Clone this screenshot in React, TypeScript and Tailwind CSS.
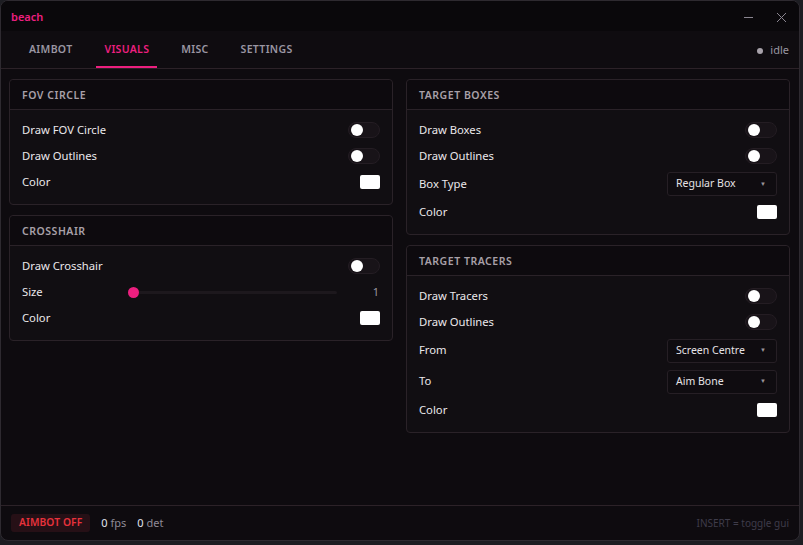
import React from 'react'

const font = { fontFamily: '"Noto Sans", "Open Sans", sans-serif' }

const tabs = ['AIMBOT', 'VISUALS', 'MISC', 'SETTINGS']

function Toggle() {
  return (
    <div className="w-[32px] h-[16px] rounded-full bg-[#181318] border border-[#241d23] flex items-center px-[2px]">
      <div className="w-[12px] h-[12px] rounded-full bg-white" />
    </div>
  )
}

function Swatch() {
  return <div className="w-[20px] h-[14px] rounded-[2px] bg-white" />
}

function Select({ value }: { value: string }) {
  return (
    <div className="w-[110px] h-[24px] rounded-[3px] bg-[#0f0c10] border border-[#261f25] flex items-center justify-between pl-[8px] pr-[10px]">
      <span className="text-[10.5px] text-[#e6e3e6]">{value}</span>
      <span className="text-[6px] text-[#9a949a]">▼</span>
    </div>
  )
}

function Row({ label, children, h = 'h-[26px]' }: { label: string; children: React.ReactNode; h?: string }) {
  return (
    <div className={`flex items-center justify-between ${h}`}>
      <span className="text-[11.25px] text-[#ebe8eb]">{label}</span>
      {children}
    </div>
  )
}

function Panel({ title, children }: { title: string; children: React.ReactNode }) {
  return (
    <div className="rounded-[4px] border border-[#2a2228] bg-[#110e12]">
      <div className="h-[30px] flex items-center px-[12px] pt-[3px] border-b border-[#2a2228] bg-[#0d0a0e] rounded-t-[4px]">
        <span className="text-[10.5px] font-semibold tracking-[0.05em] text-[#a8a0a8]">{title}</span>
      </div>
      <div className="px-[12px] pt-[7px] pb-[9px]">{children}</div>
    </div>
  )
}

export default function App() {
  return (
    <div className="w-[803px] h-[545px] bg-[#1d1d22]" style={font}>
      <div className="w-[800px] h-[541px] rounded-[8px] border border-[#2e2a30] bg-[#0e0b0f] flex flex-col overflow-hidden">
        {/* Title bar */}
        <div className="h-[30px] bg-[#0a080b] flex items-center justify-between pl-[10px] pr-[12px] pt-[2px] shrink-0">
          <span className="text-[11px] font-semibold text-[#ec1f7f]">beach</span>
          <div className="flex items-center gap-[22px] text-[#8a8590]">
            <svg width="11" height="11" viewBox="0 0 11 11">
              <line x1="1" y1="5.5" x2="10" y2="5.5" stroke="currentColor" strokeWidth="1" />
            </svg>
            <svg width="11" height="11" viewBox="0 0 11 11">
              <line x1="1" y1="1" x2="10" y2="10" stroke="currentColor" strokeWidth="1" />
              <line x1="10" y1="1" x2="1" y2="10" stroke="currentColor" strokeWidth="1" />
            </svg>
          </div>
        </div>

        {/* Tabs */}
        <div className="h-[38px] bg-[#0f0c10] border-b border-[#2c2228] flex items-stretch justify-between pl-[20px] pr-[10px] shrink-0">
          <div className="flex items-stretch gap-[16px]">
            {tabs.map((t) => (
              <div
                key={t}
                className={
                  t === 'VISUALS'
                    ? 'px-[8px] flex items-center text-[10.5px] font-semibold tracking-[0.03em] text-[#ec1f7f] border-b-2 border-[#ec1f7f] pt-[3px]'
                    : 'px-[8px] flex items-center text-[10.5px] font-semibold tracking-[0.03em] text-[#9a96a2] border-b-2 border-transparent pt-[3px]'
                }
              >
                {t}
              </div>
            ))}
          </div>
          <div className="flex items-center gap-[7px] pt-[2px]">
            <div className="w-[6px] h-[6px] rounded-full bg-[#a8a2aa]" />
            <span className="text-[11px] text-[#9a96a2]">idle</span>
          </div>
        </div>

        {/* Content */}
        <div className="flex-1 grid grid-cols-2 gap-[13px] pl-[8px] pr-[9px] pt-[10px] items-start">
          <div className="flex flex-col gap-[10px]">
            <Panel title="FOV CIRCLE">
              <Row label="Draw FOV Circle"><Toggle /></Row>
              <Row label="Draw Outlines"><Toggle /></Row>
              <Row label="Color"><Swatch /></Row>
            </Panel>
            <Panel title="CROSSHAIR">
              <Row label="Draw Crosshair"><Toggle /></Row>
              <Row label="Size">
                <div className="flex items-center flex-1 ml-[90px]">
                  <div className="relative flex-1 h-[3px] bg-[#1d181d] rounded-full mr-[36px]">
                    <div className="absolute left-[-5px] top-[-4px] w-[11px] h-[11px] rounded-full bg-[#ec1f7f]" />
                  </div>
                  <span className="text-[11px] text-[#9a96a2] mr-[1px]">1</span>
                </div>
              </Row>
              <Row label="Color"><Swatch /></Row>
            </Panel>
          </div>
          <div className="flex flex-col gap-[10px]">
            <Panel title="TARGET BOXES">
              <Row label="Draw Boxes"><Toggle /></Row>
              <Row label="Draw Outlines"><Toggle /></Row>
              <Row label="Box Type" h="h-[30px]"><Select value="Regular Box" /></Row>
              <Row label="Color"><Swatch /></Row>
            </Panel>
            <Panel title="TARGET TRACERS">
              <Row label="Draw Tracers"><Toggle /></Row>
              <Row label="Draw Outlines"><Toggle /></Row>
              <Row label="From" h="h-[31px]"><Select value="Screen Centre" /></Row>
              <Row label="To" h="h-[31px]"><Select value="Aim Bone" /></Row>
              <Row label="Color"><Swatch /></Row>
            </Panel>
          </div>
        </div>

        {/* Footer */}
        <div className="h-[35px] border-t border-[#2c2228] flex items-center justify-between pl-[10px] pr-[10px] shrink-0">
          <div className="flex items-center gap-[11px]">
            <div className="h-[18px] px-[8px] rounded-[3px] bg-[#261016] flex items-center">
              <span className="text-[10.25px] font-semibold tracking-[0.01em] text-[#e8323c]">AIMBOT OFF</span>
            </div>
            <span className="text-[11px] text-[#8e8a96]"><span className="text-[#e0e4f0]">0</span> fps</span>
            <span className="text-[11px] text-[#8e8a96]"><span className="text-[#e0e4f0]">0</span> det</span>
          </div>
          <span className="text-[10px] text-[#3e3c4a]">INSERT = toggle gui</span>
        </div>
      </div>
    </div>
  )
}
